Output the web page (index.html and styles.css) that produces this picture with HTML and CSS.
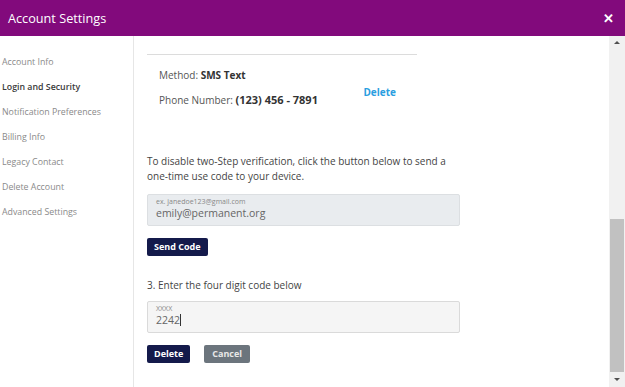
FILE: index.html
```
<!DOCTYPE html>
<html>
<head>
<meta charset="utf-8">
<link rel="stylesheet" href="styles.css">
</head>
<body>
<div class="header">
  <span class="title">Account Settings</span>
  <span class="close">&#x2715;</span>
</div>
<div class="main">
  <nav class="sidebar">
    <div class="nav-item">Account Info</div>
    <div class="nav-item active">Login and Security</div>
    <div class="nav-item">Notification Preferences</div>
    <div class="nav-item">Billing Info</div>
    <div class="nav-item">Legacy Contact</div>
    <div class="nav-item">Delete Account</div>
    <div class="nav-item">Advanced Settings</div>
  </nav>
  <section class="content">
    <div class="divider"></div>
    <div class="method">
      <div class="method-info">
        <div class="row">Method: <b>SMS Text</b></div>
        <div class="row">Phone Number: <b class="phone">(123) 456 - 7891</b></div>
      </div>
      <a class="link">Delete</a>
    </div>
    <p class="desc">To disable two-Step verification, click the button below to send a one-time use code to your device.</p>
    <div class="field filled">
      <div class="hint">ex. janedoe123@gmail.com</div>
      <div class="value">emily@permanent.org</div>
    </div>
    <div class="actions"><button class="btn primary">Send Code</button></div>
    <p class="step">3. Enter the four digit code below</p>
    <div class="field code">
      <div class="hint">XXXX</div>
      <div class="value">2242<span class="caret"></span></div>
    </div>
    <div class="actions">
      <button class="btn primary">Delete</button>
      <button class="btn secondary">Cancel</button>
    </div>
  </section>
  <div class="scrollbar">
    <div class="arrow up"></div>
    <div class="track"><div class="thumb"></div></div>
    <div class="arrow down"></div>
  </div>
</div>
</body>
</html>
```
FILE: styles.css
```
* { box-sizing: border-box; }
html, body { margin: 0; padding: 0; }
body {
  width: 625px;
  height: 387px;
  overflow: hidden;
  font-family: "Open Sans", "Noto Sans", sans-serif;
  background: #fff;
  color: #444;
}
.header {
  height: 36px;
  background: #820a7c;
  color: #fff;
  display: flex;
  align-items: center;
  justify-content: space-between;
  padding: 0 11px 0 8px;
}
.title { font-size: 12.7px; }
.close { font-size: 13px; font-weight: 600; }
.main {
  display: flex;
  height: 351px;
}
.sidebar {
  width: 134px;
  border-right: 1px solid #e6e6e6;
  padding-top: 19px;
  flex-shrink: 0;
}
.nav-item {
  font-size: 8.8px;
  color: #8a8a8a;
  height: 25px;
  line-height: 14px;
  padding-left: 2px;
}
.nav-item.active { color: #3a3a3a; font-weight: 600; }
.content {
  flex: 1;
  padding-left: 13px;
  padding-top: 18px;
}
.divider {
  width: 270px;
  height: 1px;
  background: #dcdcdc;
}
.method {
  width: 270px;
  display: flex;
  align-items: center;
  padding-left: 12px;
  padding-top: 12px;
}
.method-info { flex: 1; }
.row {
  font-size: 10px;
  color: #555;
  height: 25px;
  line-height: 16px;
}
.row b { color: #333; font-weight: 700; }
.row .phone { font-size: 11px; }
.link {
  color: #2a9ee0;
  font-weight: 700;
  font-size: 10px;
  margin-right: 21px;
  margin-top: 0;
}
.desc {
  margin: 37px 0 0 0;
  width: 320px;
  font-size: 10px;
  line-height: 15px;
  color: #444;
}
.field {
  width: 313px;
  height: 32px;
  border: 1px solid #dadada;
  border-radius: 2px;
  background: #f5f5f5;
  padding: 2px 8px 0 8px;
  margin-top: 10px;
}
.field.filled { background: #e9ecef; border-color: #dcdfe2; }
.field.code { margin-top: 8px; }
.hint { font-size: 7px; color: #888; line-height: 9px; }
.value { font-size: 10.5px; color: #666; line-height: 14px; }
.caret {
  display: inline-block;
  width: 1px;
  height: 12px;
  background: #333;
  vertical-align: -2px;
}
.actions {
  display: flex;
  gap: 14px;
  margin-top: 12px;
}
.field.code + .actions { margin-top: 12px; }
.btn {
  height: 18px;
  border: none;
  border-radius: 2px;
  color: #fff;
  font-family: "Open Sans", "Noto Sans", sans-serif;
  font-weight: 700;
  font-size: 9px;
  padding: 0 7px;
  line-height: 18px;
}
.btn.primary { background: #141a4b; }
.btn.secondary { background: #6c757d; color: #e8e8e8; padding: 0 8px; }
.step {
  margin: 22px 0 0 0;
  font-size: 10px;
  line-height: 15px;
  color: #444;
}
.scrollbar {
  width: 16px;
  background: #f1f1f1;
  display: flex;
  flex-direction: column;
  flex-shrink: 0;
}
.arrow { height: 14px; position: relative; }
.arrow.up::after, .arrow.down::after {
  content: "";
  position: absolute;
  left: 5px;
  border-left: 3px solid transparent;
  border-right: 3px solid transparent;
}
.arrow.up::after { top: 5px; border-bottom: 3px solid #505050; }
.arrow.down::after { top: 5px; border-top: 3px solid #505050; }
.track {
  flex: 1;
  display: flex;
  flex-direction: column;
  justify-content: flex-end;
  padding: 0 1px 1px 1px;
}
.thumb {
  height: 153px;
  background: #c1c1c1;
}
```
